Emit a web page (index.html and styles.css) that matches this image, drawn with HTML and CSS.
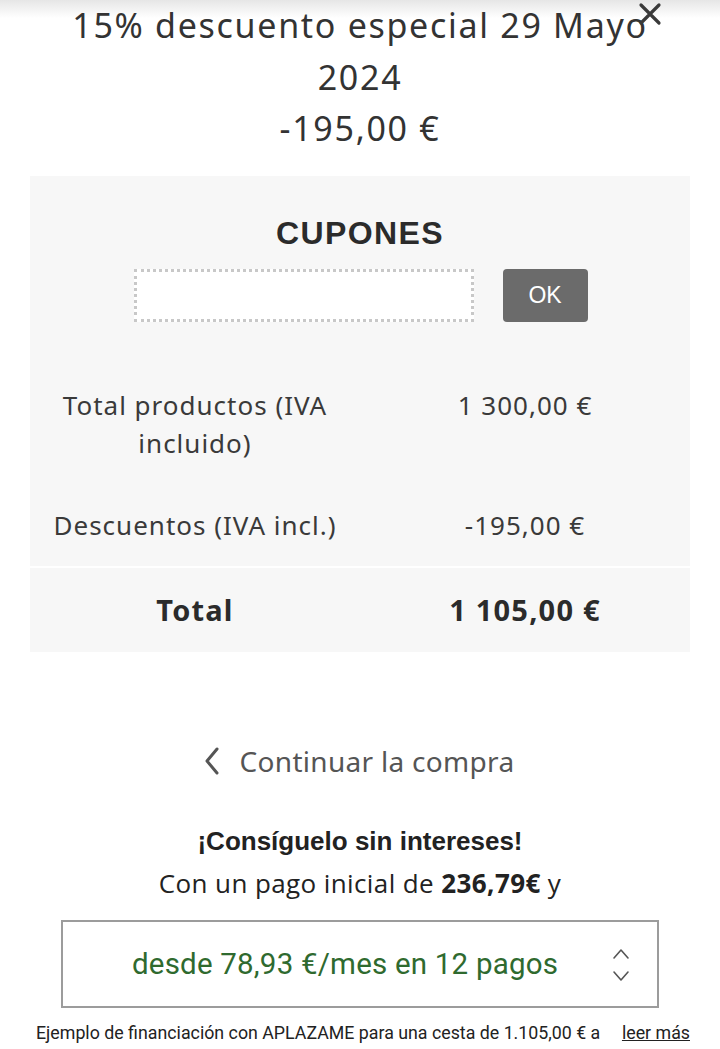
FILE: index.html
```html
<!DOCTYPE html>
<html lang="es">
<head>
<meta charset="utf-8">
<title>Carrito</title>
<link rel="stylesheet" href="styles.css">
</head>
<body>
<div class="page">
  <div class="promo">
    <h1 class="promo-title">15% descuento especial 29 Mayo 2024</h1>
    <div class="promo-amount">-195,00 €</div>
    <button class="close" aria-label="Cerrar">
      <svg width="24" height="24" viewBox="0 0 24 24"><path d="M3 3 L21 21 M21 3 L3 21" stroke="#3a3a3a" stroke-width="3.2" stroke-linecap="round"/></svg>
    </button>
  </div>

  <section class="summary">
    <div class="coupons">
      <h2 class="coupons-title">CUPONES</h2>
      <div class="coupons-form">
        <div class="coupon-input"></div>
        <button class="coupon-ok">OK</button>
      </div>
    </div>
    <div class="row">
      <div class="cell">Total productos (IVA<br>incluido)</div>
      <div class="cell">1 300,00 €</div>
    </div>
    <div class="row">
      <div class="cell">Descuentos (IVA incl.)</div>
      <div class="cell">-195,00 €</div>
    </div>
    <div class="row total">
      <div class="cell">Total</div>
      <div class="cell">1 105,00 €</div>
    </div>
  </section>

  <a class="continue">
    <svg width="16" height="28" viewBox="0 0 16 28"><path d="M13 2 L3 14 L13 26" fill="none" stroke="#555" stroke-width="3" stroke-linecap="round" stroke-linejoin="round"/></svg>
    <span>Continuar la compra</span>
  </a>

  <div class="finance">
    <p class="finance-head">¡Consíguelo sin intereses!</p>
    <p class="finance-sub">Con un pago inicial de <b>236,79€</b> y</p>
    <div class="finance-select">
      <span class="finance-option">desde 78,93 €/mes en 12 pagos</span>
      <svg class="finance-arrows" width="18" height="40" viewBox="0 0 18 40"><path d="M2 13 L9 5 L16 13 M2 27 L9 35 L16 27" fill="none" stroke="#555" stroke-width="1.6" stroke-linecap="round" stroke-linejoin="round"/></svg>
    </div>
    <div class="finance-foot">
      <span>Ejemplo de financiación con APLAZAME para una cesta de 1.105,00 € a</span>
      <a class="more">leer más</a>
    </div>
  </div>
</div>
</body>
</html>
```
FILE: styles.css
```css
* { box-sizing: border-box; }
html, body { margin: 0; padding: 0; }
body {
  background: #fff linear-gradient(#e6e6e6, #ffffff 18px) no-repeat;
  font-family: "Noto Sans", sans-serif;
  color: #333;
  width: 720px;
  height: 1049px;
  overflow: hidden;
}
.page { display: flex; flex-direction: column; align-items: center; }

.promo {
  position: relative;
  width: 720px;
  padding: 0 60px;
  text-align: center;
  font-size: 34px;
  line-height: 51.5px;
  letter-spacing: 1.7px;
  color: #333;
}
.promo-title { margin: 0; font-size: inherit; font-weight: 400; }
.promo-amount { margin: 0; }
.close {
  position: absolute;
  top: 2px;
  left: 638px;
  border: 0;
  background: none;
  padding: 0;
  width: 24px;
  height: 24px;
}

.summary {
  width: 660px;
  margin-top: 21px;
  background: #f7f7f7;
}
.coupons { padding-top: 40px; padding-bottom: 42px; }
.coupons-title {
  margin: 0;
  text-align: center;
  font-family: "Liberation Sans", Arial, sans-serif;
  font-weight: 700;
  font-size: 32px;
  line-height: 34px;
  color: #2b2b2b;
  letter-spacing: 1.4px;
}
.coupons-form {
  margin-top: 19px;
  display: flex;
  justify-content: center;
  gap: 29px;
  padding-left: 1px;
}
.coupon-input {
  width: 340px;
  height: 53px;
  background: #fff;
  border: 3px dotted #c8c8c8;
}
.coupon-ok {
  width: 85px;
  height: 53px;
  border: 0;
  border-radius: 4px;
  background: #6b6b6b;
  color: #fff;
  font-family: "Liberation Sans", Arial, sans-serif;
  font-size: 23px;
  padding: 0;
}

.row {
  display: grid;
  grid-template-columns: 1fr 1fr;
  padding: 22px 0;
  font-size: 26px;
  line-height: 38px;
  letter-spacing: 1px;
  color: #3a3a3a;
}
.cell { text-align: center; }
.row.total {
  border-top: 2px solid #fff;
  padding: 0;
  height: 86px;
  align-items: center;
  font-weight: 700;
  font-size: 29px;
  letter-spacing: 1.2px;
  color: #2b2b2b;
}

.continue {
  margin-top: 91px;
  display: flex;
  align-items: center;
  gap: 20px;
  font-size: 28px;
  line-height: 36px;
  color: #555;
  letter-spacing: 0.3px;
  padding-right: 2px;
}

.finance { width: 720px; display: flex; flex-direction: column; align-items: center; margin-top: 41px; }
.finance p {
  margin: 0;
  line-height: 42px;
  color: #222;
}
.finance-head {
  font-family: "Liberation Sans", Arial, sans-serif;
  font-weight: 700;
  font-size: 26px;
}
.finance-sub { font-family: "Open Sans", sans-serif; font-size: 26px; letter-spacing: 0.4px; }
.finance-sub b { font-weight: 700; }
.finance-select {
  margin-top: 16px;
  width: 598px;
  height: 88px;
  border: 2px solid #9c9c9c;
  display: flex;
  align-items: center;
  justify-content: space-between;
  padding: 0 27px 0 69px;
}
.finance-option {
  font-family: Roboto, sans-serif;
  font-size: 29.5px;
  letter-spacing: 0.2px;
  color: #2f6a2f;
}
.finance-arrows { margin-top: 2px; }
.finance-foot {
  width: 720px;
  margin-top: 13px;
  display: flex;
  justify-content: space-between;
  padding: 0 30px 0 36px;
  font-family: Roboto, sans-serif;
  font-size: 17.8px;
  line-height: 24px;
  color: #222;
}
.more { text-decoration: underline; color: #222; }
```
